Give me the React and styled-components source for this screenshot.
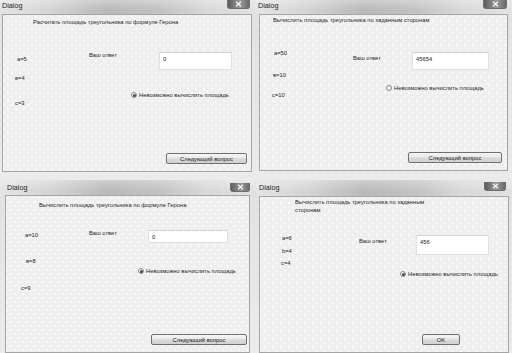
import React from "react";
import styled, { createGlobalStyle } from "styled-components";

const LINE = 8;

const GlobalStyle = createGlobalStyle`
  html, body { margin: 0; padding: 0; background: #e8e8e8; }
  body { font-family: "Liberation Sans", Arial, sans-serif; color: #262626; }
`;

const Desktop = styled.div`
  display: grid;
  grid-template-columns: 256px 256px;
  grid-template-rows: 180px 173px;
  width: 512px;
  height: 353px;
  overflow: hidden;
  background: #e6e6e6;
`;

const Window = styled.div`
  display: flex;
  flex-direction: column;
  min-height: 0;
  overflow: hidden;
`;

const TitleBar = styled.div`
  display: flex;
  align-items: flex-start;
  flex: 0 0 ${(p) => p.$h}px;
  background:
    linear-gradient(180deg, rgba(255, 255, 255, 0.3), rgba(255, 255, 255, 0) 70%),
    linear-gradient(90deg, #e4e4e4 0%, #d4d4d4 20%, #b9b9b9 42%, #c2c2c2 62%, #d8d8d8 80%, #e2e2e2 100%);
`;

const Caption = styled.span`
  margin: ${(p) => p.$y}px 0 0 ${(p) => p.$x}px;
  font-size: 7.2px;
  line-height: 9px;
  color: #222;
`;

const CloseButton = styled.div`
  display: flex;
  align-items: center;
  justify-content: center;
  margin: ${(p) => p.$y}px ${(p) => p.$r}px 0 auto;
  width: ${(p) => p.$w}px;
  height: 9px;
  border: 1px solid #6e6e6e;
  border-top: none;
  border-radius: 0 0 3px 3px;
  box-sizing: border-box;
  background: linear-gradient(90deg, #5e5e5e, #8c8c8c 45%, #9c9c9c 55%, #6a6a6a);
`;

const Frame = styled.div`
  flex: 1;
  display: flex;
  min-height: 0;
  padding: 0 ${(p) => p.$r}px ${(p) => p.$b}px ${(p) => p.$l}px;
  background: linear-gradient(180deg, #e2e2e2, #ebebeb);
`;

const Client = styled.div`
  flex: 1;
  display: flex;
  flex-direction: column;
  min-height: 0;
  border: 1px solid #a6a6a6;
  background-color: #efefef;
  background-image:
    radial-gradient(circle, rgba(255, 255, 255, 0.95) 0.6px, transparent 1px),
    radial-gradient(circle, rgba(255, 255, 255, 0.8) 0.6px, transparent 1px);
  background-size: 8px 8px, 8px 8px;
  background-position: 1px 2px, 5px 6px;
  font-size: 5.8px;
  line-height: ${LINE}px;
`;

const Heading = styled.div`
  margin: ${(p) => p.$y}px 0 0 ${(p) => p.$x}px;
  max-width: ${(p) => p.$w}px;
  white-space: ${(p) => (p.$wrap ? "normal" : "nowrap")};
`;

const Form = styled.div`
  display: grid;
  grid-template-columns: ${(p) => p.$c1}px ${(p) => p.$c2}px 1fr;
  align-items: start;
`;

const Sides = styled.div`
  display: flex;
  flex-direction: column;
`;

const Side = styled.span`
  margin: ${(p) => p.$t}px 0 0 ${(p) => p.$l}px;
  height: ${LINE}px;
  white-space: nowrap;
`;

const AnswerLabel = styled.span`
  margin-top: ${(p) => p.$t}px;
  white-space: nowrap;
`;

const AnswerCol = styled.div`
  display: flex;
  flex-direction: column;
  align-items: flex-start;
`;

const AnswerBox = styled.div`
  margin: ${(p) => p.$t}px 0 0 ${(p) => p.$l}px;
  width: ${(p) => p.$w}px;
  height: ${(p) => p.$h}px;
  box-sizing: border-box;
  padding: 2px 3px;
  background: #ffffff;
  border: 1px solid #e0e0e0;
  border-top-color: #d2d2d2;
  font-size: 5.8px;
  color: #1a1a1a;
`;

const RadioRow = styled.div`
  display: flex;
  align-items: center;
  gap: 2px;
  height: ${LINE}px;
  margin-top: ${(p) => p.$t}px;
  white-space: nowrap;
`;

const RadioMark = styled.span`
  display: flex;
  align-items: center;
  justify-content: center;
  width: 6px;
  height: 6px;
  box-sizing: border-box;
  border-radius: 50%;
  border: 1px solid #8c8c8c;
  background: radial-gradient(circle at 40% 35%, #ffffff, #d6d6d6);
  &::after {
    content: "";
    display: ${(p) => (p.$on ? "block" : "none")};
    width: 3px;
    height: 3px;
    border-radius: 50%;
    background: #4a4a4a;
  }
`;

const Footer = styled.div`
  display: flex;
  margin-top: auto;
  padding: 0 0 ${(p) => p.$b}px ${(p) => p.$x}px;
`;

const PushButton = styled.div`
  display: flex;
  align-items: center;
  justify-content: center;
  width: ${(p) => p.$w}px;
  height: 11px;
  box-sizing: border-box;
  border: 1px solid #707070;
  border-radius: 2px;
  background: linear-gradient(180deg, #f6f6f6 0%, #e8e8e8 48%, #d9d9d9 52%, #d2d2d2 100%);
  color: #1c1c1c;
`;

const dialogs = [
  {
    title: { h: 14, x: 2, y: 1 },
    close: { y: 0, r: 6, w: 23 },
    frame: { l: 2, r: 4, b: 8 },
    heading: { text: "Расчитать площадь треугольника по формуле Герона", x: 30, y: 3 },
    sides: [
      { t: "a=5", x: 14, y: 40 },
      { t: "в=4", x: 12, y: 59 },
      { t: "c=3", x: 12, y: 84 },
    ],
    answer: { x: 86, y: 36 },
    box: { value: "0", x: 156, y: 37, w: 73, h: 18 },
    radio: { x: 128, y: 76, on: true },
    button: { text: "Следующий вопрос", x: 163, w: 81, b: 7 },
  },
  {
    title: { h: 14, x: 2, y: 1 },
    close: { y: 0, r: 5, w: 24 },
    frame: { l: 3, r: 4, b: 9 },
    heading: { text: "Вычислить площадь треугольника по заданным сторонам", x: 13, y: 1 },
    sides: [
      { t: "a=50", x: 14, y: 34 },
      { t: "в=10", x: 13, y: 56 },
      { t: "c=10", x: 12, y: 76 },
    ],
    answer: { x: 93, y: 39 },
    box: { value: "45654", x: 152, y: 37, w: 77, h: 18 },
    radio: { x: 126, y: 69, on: false },
    button: { text: "Следующий вопрос", x: 148, w: 94, b: 7 },
  },
  {
    title: { h: 15, x: 7, y: 3 },
    close: { y: 3, r: 6, w: 20 },
    frame: { l: 5, r: 6, b: 0 },
    heading: { text: "Вычислить площадь треугольника по формуле Герона", x: 33, y: 5 },
    sides: [
      { t: "a=10", x: 19, y: 35 },
      { t: "в=8", x: 20, y: 61 },
      { t: "c=9", x: 15, y: 88 },
    ],
    answer: { x: 83, y: 33 },
    box: { value: "0", x: 142, y: 34, w: 80, h: 13 },
    radio: { x: 132, y: 71, on: true },
    button: { text: "Следующий вопрос", x: 145, w: 96, b: 7 },
  },
  {
    title: { h: 16, x: 3, y: 3 },
    close: { y: 2, r: 6, w: 22 },
    frame: { l: 3, r: 3, b: 0 },
    heading: {
      text: "Вычислить площадь треугольника по заданным сторонам",
      x: 35,
      y: 1,
      w: 132,
      lines: 2,
    },
    sides: [
      { t: "a=6", x: 22, y: 37 },
      { t: "b=4", x: 22, y: 50 },
      { t: "c=4", x: 21, y: 62 },
    ],
    answer: { x: 99, y: 40 },
    box: { value: "456", x: 156, y: 38, w: 73, h: 20 },
    radio: { x: 140, y: 73, on: true },
    button: { text: "OK", x: 162, w: 38, b: 7 },
  },
];

const CloseGlyph = () => (
  <svg width="7" height="6" viewBox="0 0 7 6">
    <path d="M1 0.8 L6 5.2 M6 0.8 L1 5.2" stroke="#f4f4f4" strokeWidth="1.3" />
  </svg>
);

const Dialog = ({ d }) => {
  const { heading, sides, answer, box, radio, button } = d;
  const formTop = heading.y + (heading.lines || 1) * LINE;

  let prev = formTop;
  const sideItems = sides.map((s) => {
    const t = s.y - prev;
    prev = s.y + LINE;
    return (
      <Side key={s.t} $t={t} $l={s.x}>
        {s.t}
      </Side>
    );
  });

  return (
    <Window>
      <TitleBar $h={d.title.h}>
        <Caption $x={d.title.x} $y={d.title.y}>
          Dialog
        </Caption>
        <CloseButton $y={d.close.y} $r={d.close.r} $w={d.close.w}>
          <CloseGlyph />
        </CloseButton>
      </TitleBar>
      <Frame $l={d.frame.l} $r={d.frame.r} $b={d.frame.b}>
        <Client>
          <Heading $x={heading.x} $y={heading.y} $w={heading.w || 240} $wrap={!!heading.lines}>
            {heading.text}
          </Heading>
          <Form $c1={answer.x} $c2={radio.x - answer.x}>
            <Sides>{sideItems}</Sides>
            <AnswerLabel $t={answer.y - formTop}>Ваш ответ</AnswerLabel>
            <AnswerCol>
              <AnswerBox
                $t={box.y - formTop}
                $l={box.x - radio.x}
                $w={box.w}
                $h={box.h}
              >
                {box.value}
              </AnswerBox>
              <RadioRow $t={radio.y - box.y - box.h}>
                <RadioMark $on={radio.on} />
                <span>Невозможно вычислить площадь</span>
              </RadioRow>
            </AnswerCol>
          </Form>
          <Footer $x={button.x} $b={button.b}>
            <PushButton $w={button.w}>{button.text}</PushButton>
          </Footer>
        </Client>
      </Frame>
    </Window>
  );
};

export default function App() {
  return (
    <>
      <GlobalStyle />
      <Desktop>
        {dialogs.map((d, i) => (
          <Dialog key={i} d={d} />
        ))}
      </Desktop>
    </>
  );
}
